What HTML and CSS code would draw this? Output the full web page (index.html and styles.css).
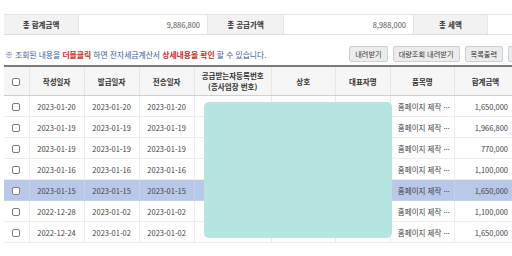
FILE: index.html
```html
<!DOCTYPE html>
<html lang="ko">
<head>
<meta charset="utf-8">
<link rel="stylesheet" href="styles.css">
</head>
<body>
<div class="page">
  <div class="summary">
    <div class="s-label">총 합계금액</div>
    <div class="s-value">9,886,800</div>
    <div class="s-label">총 공급가액</div>
    <div class="s-value">8,988,000</div>
    <div class="s-label">총 세액</div>
    <div class="s-value"></div>
  </div>

  <div class="toolbar">
    <p class="notice">※ 조회된 내용을 <em>더블클릭</em> 하면 전자세금계산서 <em>상세내용을 확인</em> 할 수 있습니다.</p>
    <div class="buttons">
      <button class="btn">내려받기</button>
      <button class="btn">대량조회 내려받기</button>
      <button class="btn">목록출력</button>
      <button class="btn btn-edge" aria-label="인쇄"></button>
    </div>
  </div>

  <div class="grid-wrap">
    <table class="grid">
      <colgroup>
        <col class="c-chk"><col class="c-date"><col class="c-date"><col class="c-date">
        <col class="c-reg"><col class="c-name"><col class="c-date"><col class="c-name"><col class="c-amt">
      </colgroup>
      <thead>
        <tr>
          <th><span class="chk"></span></th>
          <th>작성일자</th>
          <th>발급일자</th>
          <th>전송일자</th>
          <th>공급받는자등록번호<br>(종사업장 번호)</th>
          <th>상호</th>
          <th>대표자명</th>
          <th>품목명</th>
          <th>합계금액</th>
        </tr>
      </thead>
      <tbody>
        <tr><td><span class="chk"></span></td><td>2023-01-20</td><td>2023-01-20</td><td>2023-01-20</td><td></td><td></td><td></td><td class="item">홈페이지 제작 ···</td><td class="amt">1,650,000</td></tr>
        <tr><td><span class="chk"></span></td><td>2023-01-19</td><td>2023-01-19</td><td>2023-01-19</td><td></td><td></td><td></td><td class="item">홈페이지 제작 ···</td><td class="amt">1,966,800</td></tr>
        <tr><td><span class="chk"></span></td><td>2023-01-19</td><td>2023-01-19</td><td>2023-01-19</td><td></td><td></td><td></td><td class="item">홈페이지 제작 ···</td><td class="amt">770,000</td></tr>
        <tr><td><span class="chk"></span></td><td>2023-01-16</td><td>2023-01-16</td><td>2023-01-16</td><td></td><td></td><td></td><td class="item">홈페이지 제작 ···</td><td class="amt">1,100,000</td></tr>
        <tr class="selected"><td><span class="chk"></span></td><td>2023-01-15</td><td>2023-01-15</td><td>2023-01-15</td><td></td><td></td><td></td><td class="item">홈페이지 제작 ···</td><td class="amt">1,650,000</td></tr>
        <tr><td><span class="chk"></span></td><td>2022-12-28</td><td>2023-01-02</td><td>2023-01-02</td><td></td><td></td><td></td><td class="item">홈페이지 제작 ···</td><td class="amt">1,100,000</td></tr>
        <tr><td><span class="chk"></span></td><td>2022-12-24</td><td>2023-01-02</td><td>2023-01-02</td><td></td><td></td><td></td><td class="item">홈페이지 제작 ···</td><td class="amt">1,650,000</td></tr>
      </tbody>
    </table>
    <div class="mask"></div>
  </div>
</div>
</body>
</html>
```

FILE: styles.css
```css
html, body {
  margin: 0;
  padding: 0;
  background: #ffffff;
  overflow: hidden;
}
body {
  width: 512px;
  height: 256px;
  font-family: "Noto Sans CJK KR", "Noto Sans", sans-serif;
  font-size: 7.5px;
  color: #444;
}
.page {
  padding: 14px 0 0 4px;
  width: 560px;
}
.summary {
  display: grid;
  grid-template-columns: 74px 130px 75px 131px 73px 77px;
  height: 21px;
  border-top: 1px solid #e3e3e3;
  border-bottom: 1px solid #dcdcdc;
  box-sizing: border-box;
}
.s-label {
  background: #f2f2f2;
  font-weight: 700;
  color: #333;
  display: flex;
  align-items: center;
  justify-content: center;
}
.s-value {
  background: #fff;
  border-left: 1px solid #e6e6e6;
  border-right: 1px solid #e6e6e6;
  display: flex;
  align-items: center;
  justify-content: flex-end;
  padding-right: 7px;
  color: #555;
}
.toolbar {
  display: flex;
  align-items: center;
  width: 540px;
  margin-top: 11px;
  height: 16px;
}
.notice {
  margin: 0 0 0 1px;
  color: #3c5a9a;
  font-size: 7.8px;
  white-space: nowrap;
}
.notice em {
  font-style: normal;
  font-weight: 700;
  color: #d12a2a;
}
.buttons {
  display: flex;
  gap: 5px;
  margin-left: auto;
}
.btn {
  height: 16px;
  padding: 0 5px;
  font-family: inherit;
  font-size: 7.2px;
  color: #333;
  background: #ececec;
  border: 1px solid #cfcfcf;
  border-radius: 2px;
  white-space: nowrap;
  line-height: 14px;
}
.btn-edge {
  width: 36px;
}
.grid-wrap {
  position: relative;
  margin-top: 3px;
  width: 512px;
}
.grid {
  table-layout: fixed;
  border-collapse: collapse;
  width: 513px;
  border-top: 2px solid #7a7a7a;
}
.c-chk { width: 25px; }
.c-date { width: 55px; }
.c-reg { width: 77px; }
.c-name { width: 64px; }
.c-amt { width: 62px; }
.grid th {
  height: 28px;
  background: #f6f6f6;
  font-weight: 700;
  color: #333;
  border: 1px solid #e6e6e6;
  border-top: none;
  border-bottom: 1px solid #cfcfcf;
  line-height: 11px;
  padding: 0;
}
.grid td {
  height: 20px;
  padding: 0;
  border: 1px solid #ececec;
  text-align: center;
  color: #444;
  white-space: nowrap;
  overflow: hidden;
}
.grid th:first-child, .grid td:first-child { border-left: none; }
.grid td.item {
  text-align: left;
  padding-left: 7px;
}
.grid td.amt {
  text-align: right;
  padding-right: 8px;
}
.grid tr.selected td {
  background: #b9c8e7;
  border-color: #c6d2ec;
}
.chk {
  display: inline-block;
  width: 8px;
  height: 8px;
  border: 1px solid #7c7c7c;
  border-radius: 2px;
  background: #fff;
  vertical-align: middle;
  box-sizing: border-box;
}
.mask {
  position: absolute;
  left: 200px;
  top: 37px;
  width: 188px;
  height: 136px;
  background: #b5e5de;
  border-radius: 5px;
}
```
